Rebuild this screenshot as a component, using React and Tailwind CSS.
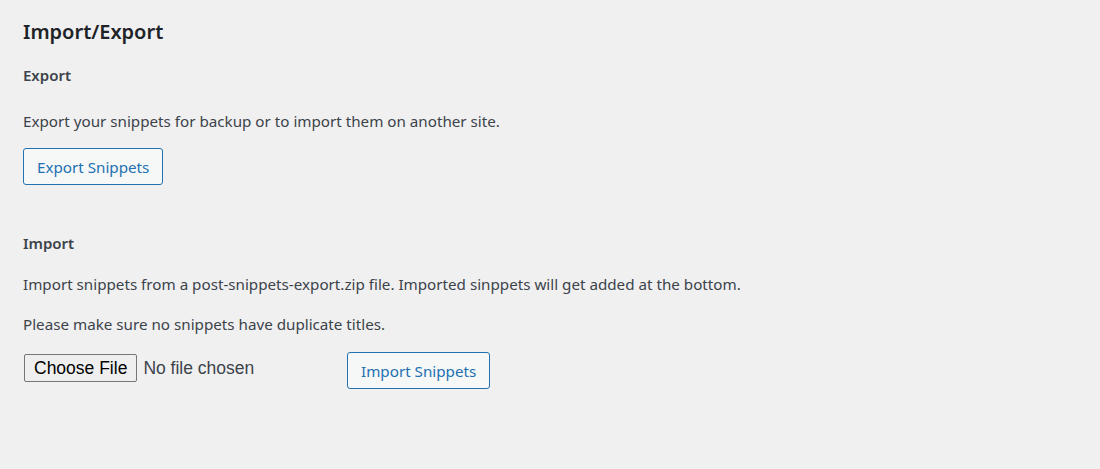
export default function App() {
    return (
        <div className="min-h-[469px] w-[1100px] bg-[#f0f0f1] px-[23px] pt-[18px] text-[15.2px] text-[#3c434a] font-['Noto_Sans',sans-serif]">
            <h1 className="text-[20px] leading-[28px] font-semibold text-[#1d2327]">Import/Export</h1>

            <h2 className="mt-[19px] text-[15px] leading-[20px] font-semibold text-[#3c434a]">Export</h2>
            <p className="mt-[26px] leading-[20px]">Export your snippets for backup or to import them on another site.</p>
            <button className="mt-[17px] h-[37px] px-[13px] rounded-[3px] border border-[#2271b1] bg-[#f6f7f7] text-[#2271b1] leading-[20px]">
                Export Snippets
            </button>

            <h2 className="mt-[48px] text-[15px] leading-[20px] font-semibold text-[#3c434a]">Import</h2>
            <p className="mt-[21px] leading-[20px]">Import snippets from a post-snippets-export.zip file. Imported sinppets will get added at the bottom.</p>
            <p className="mt-[20px] leading-[20px]">Please make sure no snippets have duplicate titles.</p>
            <div className="mt-[18px] flex items-center">
                <input
                    type="file"
                    className="ml-[1px] mt-[-5px] w-[323px] text-[17.5px] font-['Liberation_Sans',sans-serif] text-[#3c434a] file:mr-[6px] file:h-[28px] file:px-[9px] file:rounded-[2px] file:border file:border-[#767676] file:bg-[#efefef] file:text-black file:text-[17.5px]"
                />
                <button className="h-[37px] px-[13px] rounded-[3px] border border-[#2271b1] bg-[#f6f7f7] text-[#2271b1] leading-[20px]">
                    Import Snippets
                </button>
            </div>
        </div>
    );
}
